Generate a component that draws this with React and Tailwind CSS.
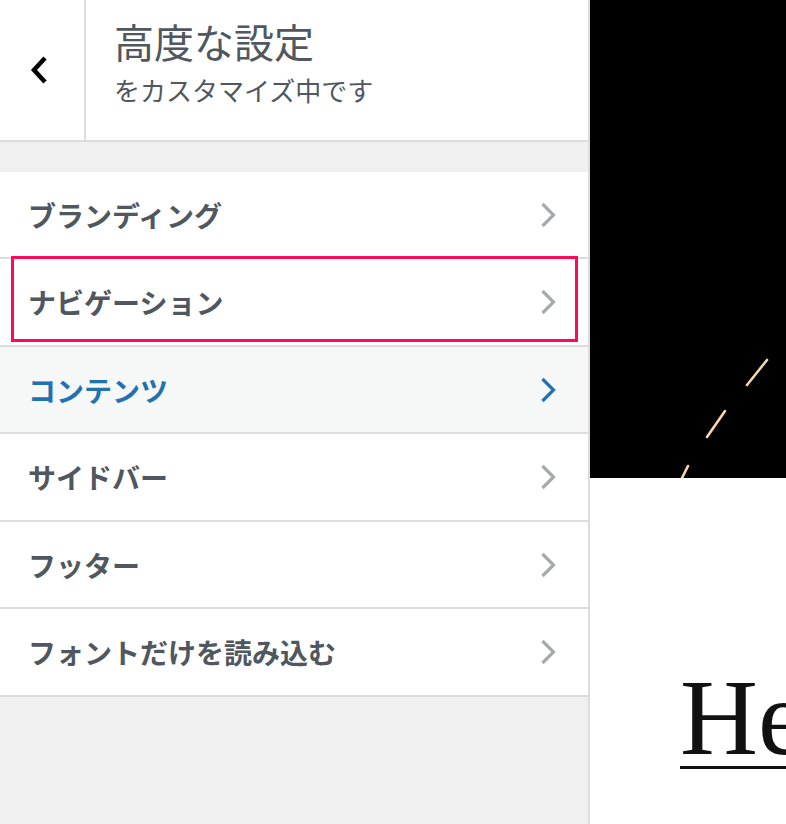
const items = [
    { label: 'ブランディング', h: 'h-[87px]' },
    { label: 'ナビゲーション', h: 'h-[88px]', marked: true },
    { label: 'コンテンツ', h: 'h-[87px]', active: true },
    { label: 'サイドバー', h: 'h-[88px]' },
    { label: 'フッター', h: 'h-[87px]' },
    { label: 'フォントだけを読み込む', h: 'h-[88px]' },
]

function Chevron({ color }) {
    return <svg width="16" height="26" viewBox="0 0 16 26" fill="none">
        <polyline points="2.5,2 13.5,13 2.5,24" stroke={color} strokeWidth="3.2" strokeLinejoin="miter" />
    </svg>
}

function SectionRow({ label, h, marked, active }) {
    return <li className={`relative ${h} flex items-center justify-between pl-[28px] pr-[32px] border-b-2 border-[#dcdcde] ${active ? 'bg-[#f6f7f7]' : 'bg-white'}`}>
        <span className={`text-[28px] leading-none font-bold ${active ? 'text-[#2271b1]' : 'text-[#50575e]'}`}>{label}</span>
        <Chevron color={active ? '#2271b1' : '#a7aaad'} />
        {/* annotation frame */}
        {marked && <div className="absolute left-[11px] right-[10px] top-[-3px] h-[86px] border-[3px] border-[#ff0a5a] pointer-events-none" />}
    </li>
}

export default function App() {
    return <div className="w-[786px] h-[824px] flex overflow-hidden font-['Noto_Sans_CJK_JP',sans-serif]">
        {/* customizer sidebar */}
        <aside className="w-[590px] shrink-0 flex flex-col bg-[#f0f0f1] border-r-2 border-[#dcdcde]">
            <header className="h-[142px] flex bg-white border-b-2 border-[#dcdcde]">
                <button className="w-[86px] shrink-0 flex items-center justify-center border-r-2 border-[#dcdcde] pr-[6px]">
                    <svg width="18" height="30" viewBox="0 0 18 30" fill="none">
                        <polyline points="15,3 4,15 15,27" stroke="#000" strokeWidth="4.5" />
                    </svg>
                </button>
                <div className="flex flex-col pl-[28px] pt-[21px]">
                    <h3 className="text-[40px] leading-none text-[#50575e]">高度な設定</h3>
                    <span className="mt-[16px] text-[26px] leading-none text-[#50575e]">をカスタマイズ中です</span>
                </div>
            </header>
            <ul className="mt-[30px]">
                {items.map(item => <SectionRow key={item.label} {...item} />)}
            </ul>
        </aside>

        {/* site preview */}
        <main className="flex-1 flex flex-col bg-white overflow-hidden">
            <div className="relative h-[478px] bg-black shrink-0">
                <svg className="absolute inset-0" width="196" height="478" viewBox="0 0 196 478" fill="none">
                    <g stroke="#f7d6b0" strokeWidth="2.6" strokeLinecap="round">
                        <line x1="177" y1="360" x2="157" y2="385" />
                        <line x1="135" y1="411" x2="117" y2="437" />
                        <line x1="98" y1="466" x2="91" y2="480" />
                    </g>
                </svg>
            </div>
            <h1 className="mt-[186px] ml-[90px] whitespace-nowrap text-[108px] leading-none text-[#111] font-['Liberation_Serif',serif] font-normal underline decoration-[3px] underline-offset-[12px]">
                Hello world!
            </h1>
        </main>
    </div>
}
